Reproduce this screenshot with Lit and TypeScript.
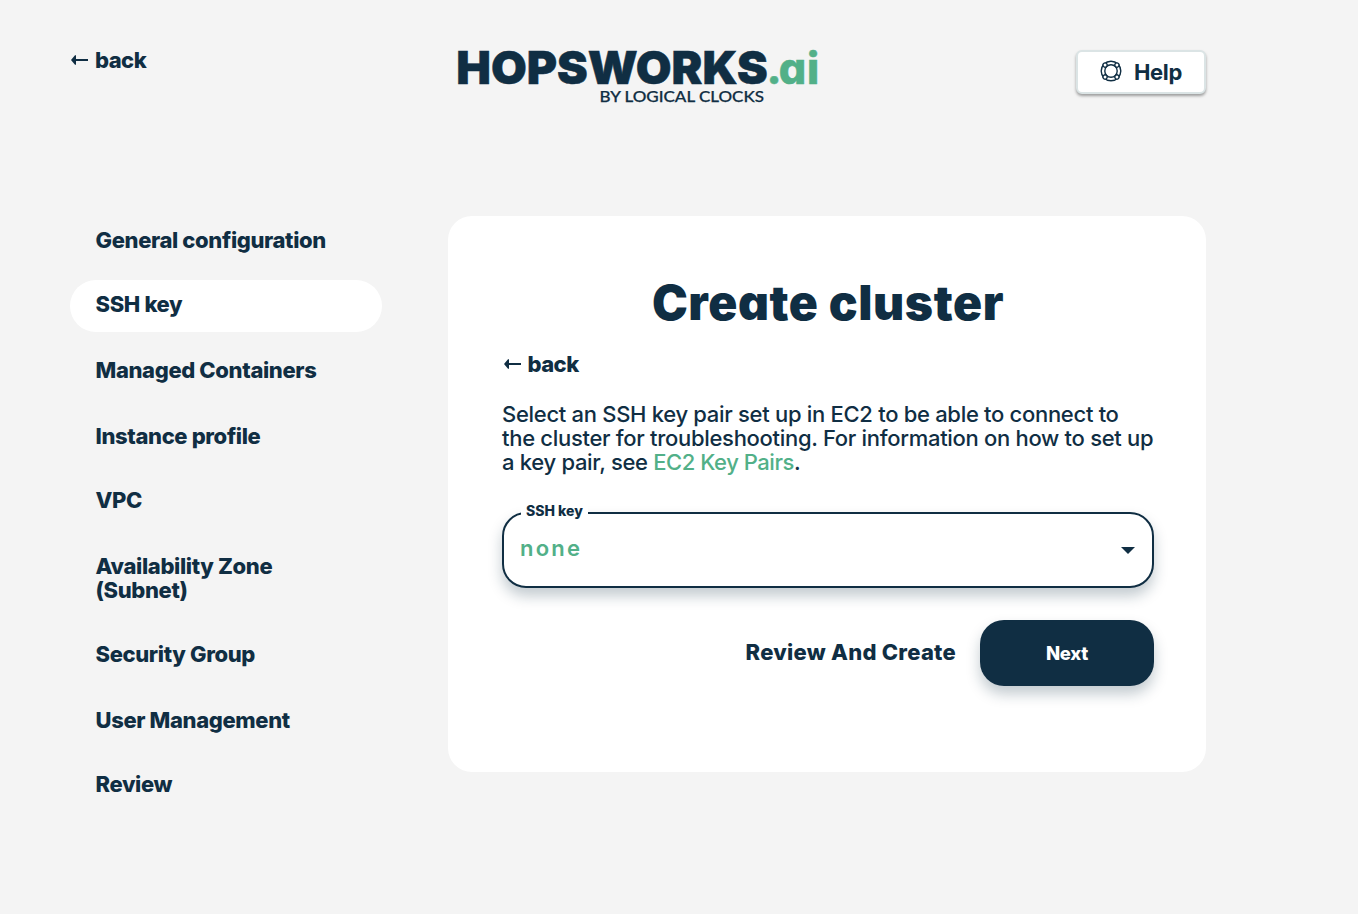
import { LitElement, html, css, svg } from "lit";
import { customElement, property } from "lit/decorators.js";

const NAVY = "#102e43";
const GREEN = "#52b088";

const STEPS = [
  "General configuration",
  "SSH key",
  "Managed Containers",
  "Instance profile",
  "VPC",
  "Availability Zone (Subnet)",
  "Security Group",
  "User Management",
  "Review",
];

@customElement("back-link")
export class BackLink extends LitElement {
  static styles = css`
    :host { display: block; }
    .link {
      display: flex;
      align-items: center;
      gap: 6px;
      height: 24px;
      color: #102e43;
      font: 800 22px/24px Inter, sans-serif;
      letter-spacing: -0.55px;
      text-decoration: none;
    }
    .arrow { display: block; }
  `;

  render() {
    return html`<a class="link">
      <svg class="arrow" width="19" height="12" viewBox="0 0 19 12">
        <path d="M1 6 L5 1.2 H6 V5 H18 V7 H6 V10.8 H5 Z" fill=${NAVY} />
      </svg>
      <span>back</span>
    </a>`;
  }
}

@customElement("brand-logo")
export class BrandLogo extends LitElement {
  static styles = css`
    :host { display: block; }
    .logo { display: block; }
    .name { font: 900 45.5px Inter, sans-serif; stroke-width: 0.5px; }
    .suffix { font: 800 43px Inter, sans-serif; font-feature-settings: "cv11"; stroke-width: 0.5px; }
    .tagline { font: 500 15.8px Lato, sans-serif; stroke-width: 0.25px; }
  `;

  render() {
    return html`<svg class="logo" width="376" height="80" viewBox="450 36 376 80">
      <text class="name" x="456.3" y="83.5" textLength="311.5" lengthAdjust="spacingAndGlyphs" fill=${NAVY} stroke=${NAVY}>HOPSWORKS</text>
      <text class="suffix" x="766.5 778.8 807" y="83.5" fill=${GREEN} stroke=${GREEN}>.ai</text>
      <text class="tagline" x="599.5" y="102" textLength="164.5" lengthAdjust="spacingAndGlyphs" fill=${NAVY} stroke=${NAVY}>BY LOGICAL CLOCKS</text>
    </svg>`;
  }
}

@customElement("help-button")
export class HelpButton extends LitElement {
  static styles = css`
    :host { display: block; }
    .button {
      box-sizing: border-box;
      display: flex;
      align-items: center;
      gap: 11px;
      width: 130px;
      height: 44px;
      padding: 0 0 0 21px;
      border: 2px solid #dbe4e5;
      border-radius: 6px;
      background: #fff;
      box-shadow: 0 2px 3px rgba(0, 0, 0, 0.36);
      color: #102e43;
      font: 700 22px/24px Inter, sans-serif;
      letter-spacing: -0.35px;
    }
    .icon { display: block; margin-bottom: 3px; }
  `;

  render() {
    const knots = [45, 135, 225, 315].map(
      (angle) => svg`<circle cx="20.4" cy="12" r="2.1" transform="rotate(${angle} 12 12)" fill="#fff" stroke=${NAVY} stroke-width="1.3" />`
    );
    return html`<button class="button">
      <svg class="icon" width="24" height="24" viewBox="0 0 24 24" fill="none">
        <circle cx="12" cy="12" r="9.8" stroke=${NAVY} stroke-width="1.4" />
        <circle cx="12" cy="12" r="6.2" stroke=${NAVY} stroke-width="1.4" />
        ${knots}
      </svg>
      <span>Help</span>
    </button>`;
  }
}

@customElement("step-nav")
export class StepNav extends LitElement {
  @property({ type: Number }) active = 0;

  static styles = css`
    :host { display: block; width: 312px; }
    .list { margin: 0; padding: 0; list-style: none; }
    .item {
      box-sizing: border-box;
      margin-bottom: 14px;
      padding: 12px 40px 16px 25.5px;
      border-radius: 26px;
      color: #102e43;
      font: 800 22px/24px Inter, sans-serif;
      letter-spacing: -0.36px;
    }
    .item.tight { margin-bottom: 12px; }
    .item.active { background: #fff; }
  `;

  render() {
    const tight = [0, 3, 5, 7];
    return html`<ul class="list">
      ${STEPS.map(
        (label, i) => html`<li class="item ${i === this.active ? "active" : ""} ${tight.includes(i) ? "tight" : ""}">${label}</li>`
      )}
    </ul>`;
  }
}

@customElement("select-field")
export class SelectField extends LitElement {
  @property() label = "";
  @property() value = "";

  static styles = css`
    :host { display: block; }
    .field {
      position: relative;
      box-sizing: border-box;
      display: flex;
      align-items: center;
      justify-content: space-between;
      height: 76px;
      padding: 0 17px 2px 16px;
      border: 2px solid #102e43;
      border-radius: 24px;
      background: #fff;
      box-shadow: 0 8px 14px rgba(17, 46, 67, 0.25);
    }
    .label {
      position: absolute;
      left: 17px;
      top: -12px;
      padding: 0 5px;
      background: #fff;
      color: #102e43;
      font: 800 14px/18px Inter, sans-serif;
    }
    .value {
      margin-bottom: 2px;
      color: #52b088;
      font: 600 22px/24px Inter, sans-serif;
      letter-spacing: 2.2px;
    }
    .caret { display: block; margin-top: 3px; }
  `;

  render() {
    return html`<div class="field">
      <span class="label">${this.label}</span>
      <span class="value">${this.value}</span>
      <svg class="caret" width="14" height="7" viewBox="0 0 14 7">
        <path d="M0 0 H14 L7 7 Z" fill=${NAVY} />
      </svg>
    </div>`;
  }
}

@customElement("app-root")
export class AppRoot extends LitElement {
  static styles = css`
    :host {
      display: block;
      box-sizing: border-box;
      height: 914px;
      padding: 36px 152px 0 70px;
      background: #f4f4f4;
      color: #102e43;
      font-family: Inter, sans-serif;
      overflow: hidden;
    }
    .header {
      display: grid;
      grid-template-columns: 380px 1fr 130px;
      align-items: start;
      height: 180px;
    }
    .back { margin-top: 12px; }
    .help { margin-top: 14px; }
    .content {
      display: flex;
      justify-content: space-between;
      align-items: flex-start;
    }
    .card {
      box-sizing: border-box;
      width: 758px;
      height: 556px;
      padding: 56px 52px 0 54px;
      border-radius: 24px;
      background: #fff;
    }
    .title {
      margin: 0 0 18px;
      text-align: center;
      font: 900 48px/62px Inter, sans-serif;
      font-feature-settings: "cv11";
      letter-spacing: 0.6px;
    }
    .text {
      margin: 26px 0 38px;
      font-size: 22px;
      font-weight: 500;
      line-height: 24px;
      letter-spacing: -0.3px;
      white-space: nowrap;
    }
    .link { color: #52b088; letter-spacing: -0.45px; }
    .card-back { padding-left: 0.5px; }
    .actions {
      display: flex;
      justify-content: flex-end;
      align-items: center;
      gap: 24px;
      margin-top: 32px;
    }
    .review {
      font: 800 22px/24px Inter, sans-serif;
      letter-spacing: 0.25px;
      padding-bottom: 2px;
    }
    .next {
      width: 174px;
      height: 66px;
      padding: 0;
      border: 0;
      border-radius: 24px;
      background: #102e43;
      color: #fff;
      box-shadow: 0 8px 14px rgba(17, 46, 67, 0.25);
      font: 800 18.5px/24px Inter, sans-serif;
      letter-spacing: -0.3px;
    }
  `;

  render() {
    return html`
      <header class="header">
        <back-link class="back"></back-link>
        <brand-logo></brand-logo>
        <help-button class="help"></help-button>
      </header>
      <main class="content">
        <step-nav .active=${1}></step-nav>
        <section class="card">
          <h1 class="title">Create cluster</h1>
          <back-link class="card-back"></back-link>
          <p class="text">
            Select an SSH key pair set up in EC2 to be able to connect to<br />the
            cluster for troubleshooting. For information on how to set up<br />a
            key pair, see <a class="link">EC2 Key Pairs</a>.
          </p>
          <select-field label="SSH key" value="none"></select-field>
          <div class="actions">
            <span class="review">Review And Create</span>
            <button class="next">Next</button>
          </div>
        </section>
      </main>
    `;
  }
}
